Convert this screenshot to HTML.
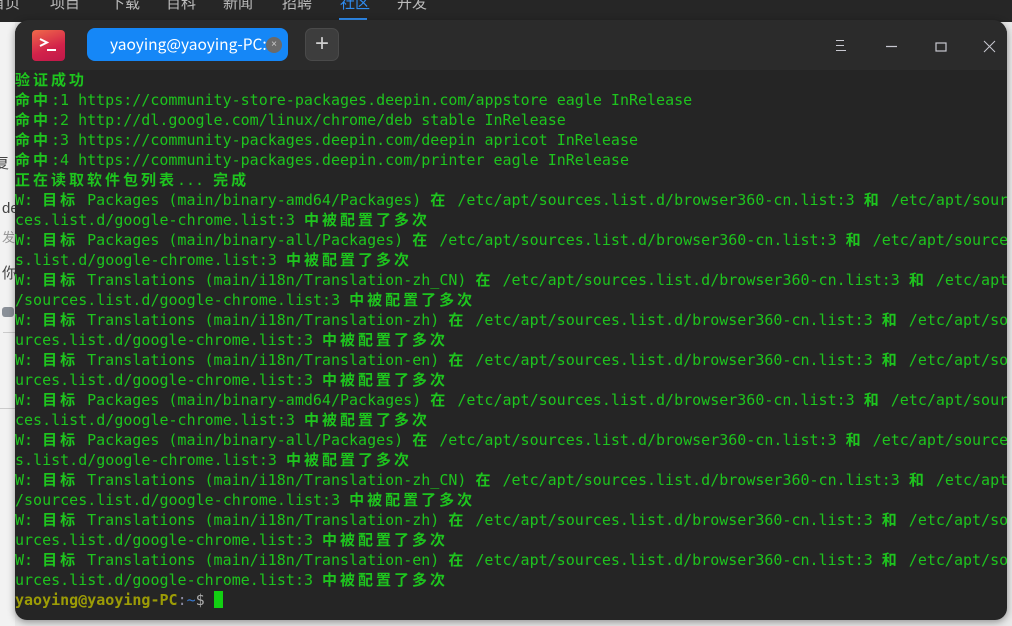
<!DOCTYPE html>
<html><head><meta charset="utf-8">
<style>
*{margin:0;padding:0;box-sizing:border-box}
body{width:1012px;height:626px;overflow:hidden;background:#e9e9e9;position:relative;font-family:"Liberation Sans","Noto Sans CJK SC",sans-serif}
.top{position:absolute;left:0;top:0;width:1012px;height:22px;background:#262626}
.nav{position:absolute;top:-8px;color:#bbb;font-size:15px}
.left{position:absolute;left:0;top:22px;width:15px;height:604px;background:#f2f2f2}
.lf{position:absolute;left:0;color:#444;font-size:15px;white-space:nowrap}
.win{position:absolute;left:15px;top:20px;width:992px;height:600px;background:#252525;border-radius:14px 14px 12px 12px;overflow:hidden;box-shadow:0 2px 8px rgba(0,0,0,.4)}
.tb{position:absolute;left:0;top:0;width:100%;height:50px;background:#2b2b2b}
.logo{position:absolute;left:17px;top:10px;width:33px;height:31px;border-radius:4px;background:linear-gradient(160deg,#f06a4a,#d2224a 60%,#c0184a)}
.tab{position:absolute;left:72px;top:8px;width:201px;height:33px;border-radius:8px;background:#1587f7;color:#fff;font-size:15.5px;line-height:33px;padding-left:23px;white-space:nowrap;font-family:"Noto Sans CJK SC","Liberation Sans",sans-serif}
.tx{position:absolute;left:179px;top:9px;width:16px;height:16px;border-radius:50%;background:#6a6a6a;color:#ccc;font-size:10px;line-height:16px;text-align:center;font-family:"Liberation Sans",sans-serif}
.plus{position:absolute;left:290px;top:8px;width:34px;height:33px;border-radius:7px;background:#3d3d3d;border:1px solid #4a4a4a;color:#cfcfcf;font-size:24px;line-height:30px;text-align:center}
.term{position:absolute;left:0;top:50px;font-family:"DejaVu Sans Mono",monospace;font-size:15px;color:#1ec41e;white-space:pre}
.l{position:absolute;left:0;height:20px;line-height:20px}
.c{font-family:"Noto Sans CJK SC",sans-serif;font-weight:bold;display:inline-block;width:18px;text-align:left;font-size:15px}
</style></head><body>
<div class="top">
<span class="nav" style="left:-10px">首页</span>
<span class="nav" style="left:50px">项目</span>
<span class="nav" style="left:110px">下载</span>
<span class="nav" style="left:166px">百科</span>
<span class="nav" style="left:223px">新闻</span>
<span class="nav" style="left:282px">招聘</span>
<span class="nav" style="left:340px;color:#2f8cf0">社区</span>
<div style="position:absolute;left:339px;top:18px;width:28px;height:2px;background:#2f8cf0"></div>
<span class="nav" style="left:397px">开发</span>
</div>
<div class="left">
<div class="lf" style="top:130px;left:-6px">复</div>
<div class="lf" style="top:178px;left:2px">de</div>
<div class="lf" style="top:205px;left:2px;color:#999;font-size:13px">发</div>
<div class="lf" style="top:240px;left:2px">你</div>
<div style="position:absolute;left:2px;top:285px;width:12px;height:10px;border-radius:3px;background:#8a9098"></div>
<div style="position:absolute;left:3px;top:310px;width:12px;height:1px;background:#ccc"></div>
<div style="position:absolute;left:0;top:386px;width:15px;height:1px;background:#ccc"></div>
</div>
<div class="win">
<div class="tb">
<div class="logo"><svg width="33" height="31"><path d="M8 9 L15 12.5 L8 16" stroke="#fff" stroke-width="2" fill="none"/><path d="M15 20 H24" stroke="#fff" stroke-width="2"/></svg></div>
<div class="tab">yaoying@yaoying-PC: ~<div class="tx">×</div></div>
<div class="plus">+</div>
<svg style="position:absolute;left:820px;top:19px" width="14" height="14"><path d="M1 1.5H9M1 6.5H9M1 11.5H11" stroke="#c8c8d0" stroke-width="1"/></svg>
<svg style="position:absolute;left:870px;top:19px" width="14" height="14"><path d="M1 7.5H12" stroke="#c8c8d0" stroke-width="1.2"/></svg>
<svg style="position:absolute;left:920px;top:22px" width="14" height="14"><rect x="1" y="1" width="10" height="8" stroke="#c8c8d0" fill="none" stroke-width="1.2"/></svg>
<svg style="position:absolute;left:968px;top:20px" width="14" height="14"><path d="M1 1L12 12M12 1L1 12" stroke="#c8c8d0" stroke-width="1"/></svg>
</div>
<div class="term">
<div class="l" style="top:0"><span class="c">验</span><span class="c">证</span><span class="c">成</span><span class="c">功</span></div>
<div class="l" style="top:20px"><span class="c">命</span><span class="c">中</span>:1 https://community-store-packages.deepin.com/appstore eagle InRelease</div>
<div class="l" style="top:40px"><span class="c">命</span><span class="c">中</span>:2 http://dl.google.com/linux/chrome/deb stable InRelease</div>
<div class="l" style="top:60px"><span class="c">命</span><span class="c">中</span>:3 https://community-packages.deepin.com/deepin apricot InRelease</div>
<div class="l" style="top:80px"><span class="c">命</span><span class="c">中</span>:4 https://community-packages.deepin.com/printer eagle InRelease</div>
<div class="l" style="top:100px"><span class="c">正</span><span class="c">在</span><span class="c">读</span><span class="c">取</span><span class="c">软</span><span class="c">件</span><span class="c">包</span><span class="c">列</span><span class="c">表</span>... <span class="c">完</span><span class="c">成</span></div>
<div class="l" style="top:120px">W: <span class="c">目</span><span class="c">标</span> Packages (main/binary-amd64/Packages) <span class="c">在</span> /etc/apt/sources.list.d/browser360-cn.list:3 <span class="c">和</span> /etc/apt/sour</div>
<div class="l" style="top:140px">ces.list.d/google-chrome.list:3 <span class="c">中</span><span class="c">被</span><span class="c">配</span><span class="c">置</span><span class="c">了</span><span class="c">多</span><span class="c">次</span></div>
<div class="l" style="top:160px">W: <span class="c">目</span><span class="c">标</span> Packages (main/binary-all/Packages) <span class="c">在</span> /etc/apt/sources.list.d/browser360-cn.list:3 <span class="c">和</span> /etc/apt/source</div>
<div class="l" style="top:180px">s.list.d/google-chrome.list:3 <span class="c">中</span><span class="c">被</span><span class="c">配</span><span class="c">置</span><span class="c">了</span><span class="c">多</span><span class="c">次</span></div>
<div class="l" style="top:200px">W: <span class="c">目</span><span class="c">标</span> Translations (main/i18n/Translation-zh_CN) <span class="c">在</span> /etc/apt/sources.list.d/browser360-cn.list:3 <span class="c">和</span> /etc/apt</div>
<div class="l" style="top:220px">/sources.list.d/google-chrome.list:3 <span class="c">中</span><span class="c">被</span><span class="c">配</span><span class="c">置</span><span class="c">了</span><span class="c">多</span><span class="c">次</span></div>
<div class="l" style="top:240px">W: <span class="c">目</span><span class="c">标</span> Translations (main/i18n/Translation-zh) <span class="c">在</span> /etc/apt/sources.list.d/browser360-cn.list:3 <span class="c">和</span> /etc/apt/so</div>
<div class="l" style="top:260px">urces.list.d/google-chrome.list:3 <span class="c">中</span><span class="c">被</span><span class="c">配</span><span class="c">置</span><span class="c">了</span><span class="c">多</span><span class="c">次</span></div>
<div class="l" style="top:280px">W: <span class="c">目</span><span class="c">标</span> Translations (main/i18n/Translation-en) <span class="c">在</span> /etc/apt/sources.list.d/browser360-cn.list:3 <span class="c">和</span> /etc/apt/so</div>
<div class="l" style="top:300px">urces.list.d/google-chrome.list:3 <span class="c">中</span><span class="c">被</span><span class="c">配</span><span class="c">置</span><span class="c">了</span><span class="c">多</span><span class="c">次</span></div>
<div class="l" style="top:320px">W: <span class="c">目</span><span class="c">标</span> Packages (main/binary-amd64/Packages) <span class="c">在</span> /etc/apt/sources.list.d/browser360-cn.list:3 <span class="c">和</span> /etc/apt/sour</div>
<div class="l" style="top:340px">ces.list.d/google-chrome.list:3 <span class="c">中</span><span class="c">被</span><span class="c">配</span><span class="c">置</span><span class="c">了</span><span class="c">多</span><span class="c">次</span></div>
<div class="l" style="top:360px">W: <span class="c">目</span><span class="c">标</span> Packages (main/binary-all/Packages) <span class="c">在</span> /etc/apt/sources.list.d/browser360-cn.list:3 <span class="c">和</span> /etc/apt/source</div>
<div class="l" style="top:380px">s.list.d/google-chrome.list:3 <span class="c">中</span><span class="c">被</span><span class="c">配</span><span class="c">置</span><span class="c">了</span><span class="c">多</span><span class="c">次</span></div>
<div class="l" style="top:400px">W: <span class="c">目</span><span class="c">标</span> Translations (main/i18n/Translation-zh_CN) <span class="c">在</span> /etc/apt/sources.list.d/browser360-cn.list:3 <span class="c">和</span> /etc/apt</div>
<div class="l" style="top:420px">/sources.list.d/google-chrome.list:3 <span class="c">中</span><span class="c">被</span><span class="c">配</span><span class="c">置</span><span class="c">了</span><span class="c">多</span><span class="c">次</span></div>
<div class="l" style="top:440px">W: <span class="c">目</span><span class="c">标</span> Translations (main/i18n/Translation-zh) <span class="c">在</span> /etc/apt/sources.list.d/browser360-cn.list:3 <span class="c">和</span> /etc/apt/so</div>
<div class="l" style="top:460px">urces.list.d/google-chrome.list:3 <span class="c">中</span><span class="c">被</span><span class="c">配</span><span class="c">置</span><span class="c">了</span><span class="c">多</span><span class="c">次</span></div>
<div class="l" style="top:480px">W: <span class="c">目</span><span class="c">标</span> Translations (main/i18n/Translation-en) <span class="c">在</span> /etc/apt/sources.list.d/browser360-cn.list:3 <span class="c">和</span> /etc/apt/so</div>
<div class="l" style="top:500px">urces.list.d/google-chrome.list:3 <span class="c">中</span><span class="c">被</span><span class="c">配</span><span class="c">置</span><span class="c">了</span><span class="c">多</span><span class="c">次</span></div>
<div class="l" style="top:520px"><b style="color:#9c9c06">yaoying@yaoying-PC</b><span style="color:#8a8aa0">:</span><span style="color:#3a7ad0">~</span><span style="color:#aaa">$</span> <span style="display:inline-block;width:9px;height:17px;background:#12d012;vertical-align:-3px"></span></div>
</div>
</div>
</body></html>
